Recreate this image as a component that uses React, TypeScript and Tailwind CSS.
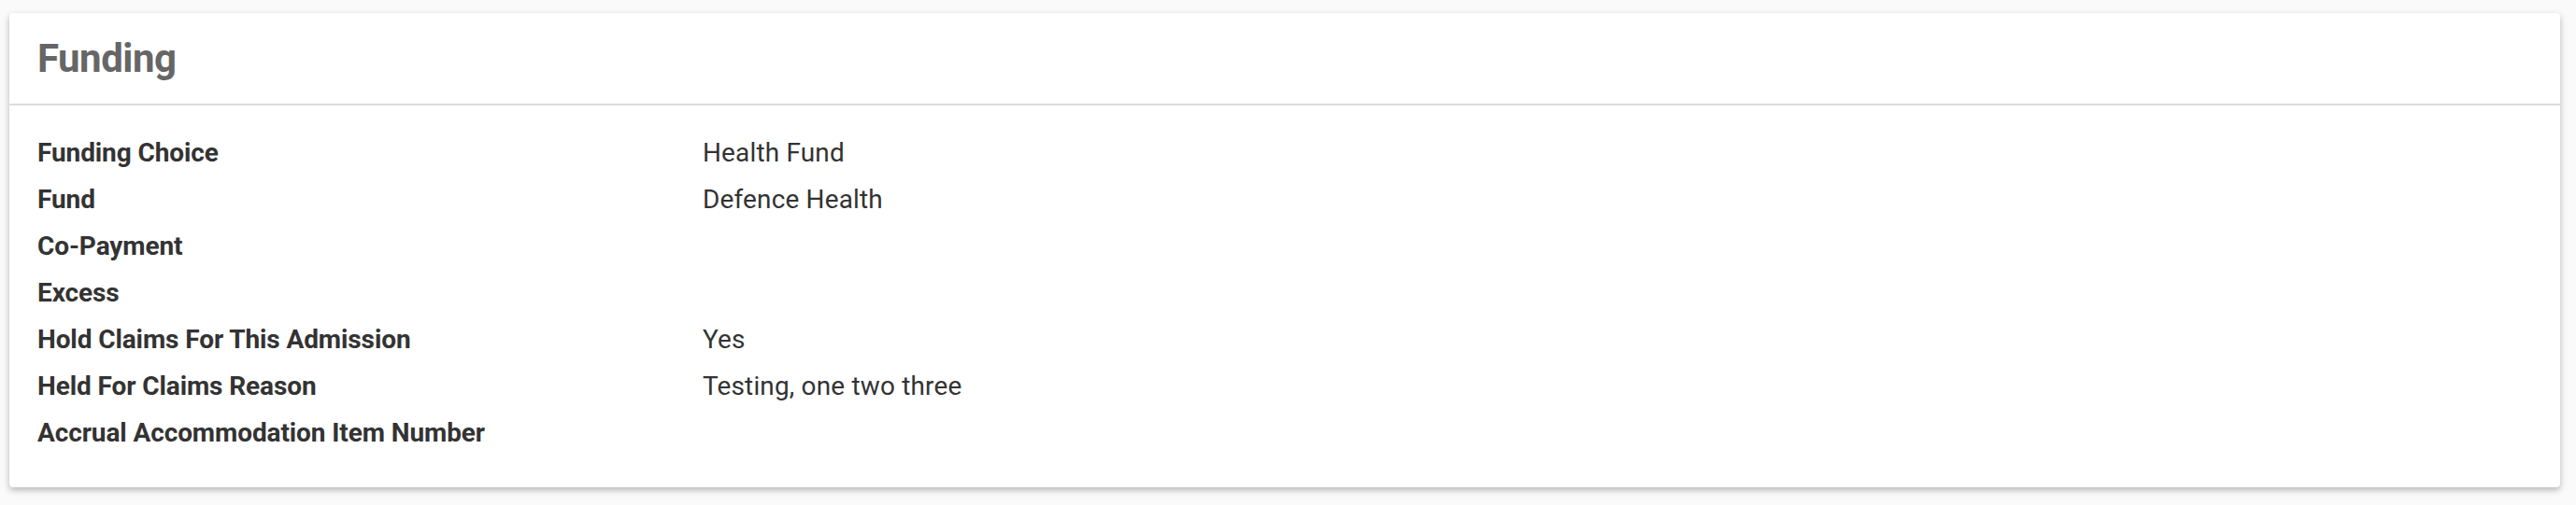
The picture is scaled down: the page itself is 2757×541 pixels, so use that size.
import React from "react";

const rows: [string, string][] = [
  ["Funding Choice", "Health Fund"],
  ["Fund", "Defence Health"],
  ["Co-Payment", ""],
  ["Excess", ""],
  ["Hold Claims For This Admission", "Yes"],
  ["Held For Claims Reason", "Testing, one two three"],
  ["Accrual Accommodation Item Number", ""],
];

export default function App() {
  return (
    <div className="min-h-[541px] w-full bg-[#fafafa] pt-[14px] pl-[10px] pr-[17px] font-['Roboto',sans-serif]">
      <div className="w-[2730px] rounded-[4px] bg-white shadow-[0_3px_7px_rgba(0,0,0,0.28)]">
        <div className="border-b-2 border-[#dcdcdc] px-[30px] py-[24px]">
          <h1 className="text-[42px] font-bold leading-[49px] tracking-[-0.5px] text-[#666666]">Funding</h1>
        </div>
        <div className="px-[30px] pt-[26px] pb-[33px]">
          {rows.map(([label, value]) => (
            <div key={label} className="flex text-[28px] leading-[50px] text-[#333333]">
              <div className="w-[712px] shrink-0 font-bold tracking-[-0.1px]">{label}</div>
              <div className="font-normal tracking-[0.15px]">{value}</div>
            </div>
          ))}
        </div>
      </div>
    </div>
  );
}
